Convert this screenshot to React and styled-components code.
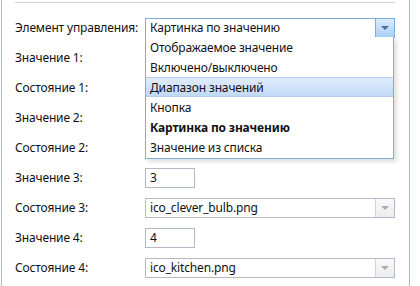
import React from "react";
import styled, { createGlobalStyle } from "styled-components";

const Global = createGlobalStyle`
  html, body { margin: 0; padding: 0; background: #fff; }
  body { font-family: "Noto Sans", "Open Sans", sans-serif; font-size: 12px; letter-spacing: -0.15px; color: #111; }
`;

const Panel = styled.div`
  margin-left: 1px;
  height: 286px;
  border-left: 1px solid #a9b8cc;
  border-right: 1px solid #99bbe8;
  padding: 2px 0 0 13px;
  box-sizing: border-box;
  width: 409px;
  position: relative;
  overflow: hidden;
`;

const TopRule = styled.div`
  width: 380px;
  height: 1px;
  background: #d3d3d3;
  margin-bottom: 15px;
`;

const Form = styled.div`
  display: flex;
  flex-direction: column;
  gap: 10px;
`;

const Row = styled.div`
  display: grid;
  grid-template-columns: 130px auto;
  align-items: center;
  height: 20px;
  position: relative;
`;

const Label = styled.div`
  line-height: 20px;
  white-space: nowrap;
`;

const Combo = styled.div`
  width: 250px;
  height: 20px;
  box-sizing: border-box;
  border: 1px solid ${(p) => (p.$active ? "#7eadd9" : "#b5b8c8")};
  display: flex;
  background: #fff;
`;

const ComboText = styled.div`
  flex: 1;
  padding-left: 4px;
  line-height: 18px;
  white-space: nowrap;
  overflow: hidden;
`;

const ComboBtn = styled.div`
  width: 18px;
  border-left: 1px solid ${(p) => (p.$active ? "#7eadd9" : "#d3d5dc")};
  background: ${(p) =>
    p.$active
      ? "linear-gradient(#dcebfc, #a9cff6)"
      : "linear-gradient(#fafafa, #ececec)"};
  display: flex;
  align-items: center;
  justify-content: center;
`;

const Arrow = styled.div`
  width: 0;
  height: 0;
  border-left: 4px solid transparent;
  border-right: 4px solid transparent;
  border-top: 4px solid ${(p) => (p.$active ? "#4f6d8f" : "#a9abb3")};
`;

const TextInput = styled.div`
  width: 50px;
  height: 20px;
  box-sizing: border-box;
  border: 1px solid #b5b8c8;
  padding-left: 4px;
  line-height: 18px;
`;

const List = styled.div`
  position: absolute;
  left: 130px;
  top: 19px;
  width: 249px;
  box-sizing: border-box;
  border: 1px solid #7eadd9;
  border-top: none;
  padding-bottom: 1px;
  background: #fff;
  box-shadow: 3px 3px 4px rgba(0, 0, 0, 0.12);
  z-index: 5;
`;

const Item = styled.div`
  height: 20px;
  padding-left: 4px;
  font-weight: ${(p) => (p.$bold ? 700 : 400)};
  background: ${(p) => (p.$hover ? "linear-gradient(#e1ecfb, #c0d9f6)" : "transparent")};
  box-sizing: border-box;
  border-top: 1px solid ${(p) => (p.$hover ? "#b3cdee" : "transparent")};
  border-bottom: 1px solid ${(p) => (p.$hover ? "#b3cdee" : "transparent")};
  line-height: 19px;
`;

function ComboBox({ value, active }) {
  return (
    <Combo $active={active}>
      <ComboText>{value}</ComboText>
      <ComboBtn $active={active}>
        <Arrow $active={active} />
      </ComboBtn>
    </Combo>
  );
}

const items = [
  { t: "Отображаемое значение" },
  { t: "Включено/выключено" },
  { t: "Диапазон значений", hover: true },
  { t: "Кнопка" },
  { t: "Картинка по значению", bold: true },
  { t: "Значение из списка" },
];

export default function App() {
  return (
    <>
      <Global />
      <Panel>
        <TopRule />
        <Form>
          <Row>
            <Label>Элемент управления:</Label>
            <ComboBox value="Картинка по значению" active />
            <List>
              {items.map((i) => (
                <Item key={i.t} $bold={i.bold} $hover={i.hover}>
                  {i.t}
                </Item>
              ))}
            </List>
          </Row>
          <Row><Label>Значение 1:</Label><div /></Row>
          <Row><Label>Состояние 1:</Label><div /></Row>
          <Row><Label>Значение 2:</Label><div /></Row>
          <Row><Label>Состояние 2:</Label><div /></Row>
          <Row>
            <Label>Значение 3:</Label>
            <TextInput>3</TextInput>
          </Row>
          <Row>
            <Label>Состояние 3:</Label>
            <ComboBox value="ico_clever_bulb.png" />
          </Row>
          <Row>
            <Label>Значение 4:</Label>
            <TextInput>4</TextInput>
          </Row>
          <Row>
            <Label>Состояние 4:</Label>
            <ComboBox value="ico_kitchen.png" />
          </Row>
        </Form>
      </Panel>
    </>
  );
}
